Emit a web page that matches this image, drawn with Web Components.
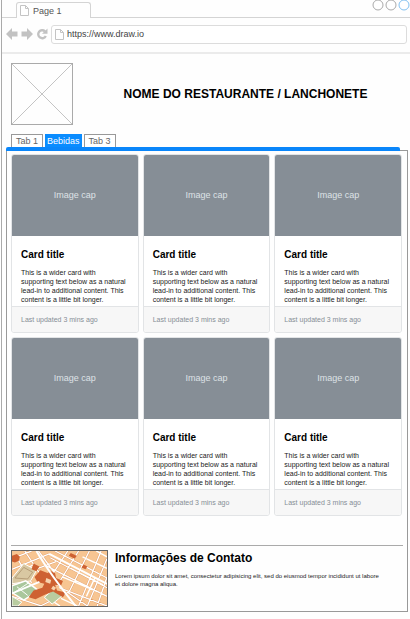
<!DOCTYPE html>
<html lang="pt-BR">
<head>
<meta charset="utf-8">
<title>Page 1</title>
<style>
html{height:100%}
body{margin:0;min-height:100%;display:flex;background:#fefefe;color:#000;font-family:"Liberation Sans",Arial,sans-serif}
browser-window{flex:1}
</style>
</head>
<body>
<browser-window>
  <site-header>NOME DO RESTAURANTE / LANCHONETE</site-header>
  <tab-strip></tab-strip>
  <tab-panel>
    <card-grid>
      <menu-card></menu-card><menu-card></menu-card><menu-card></menu-card>
      <menu-card></menu-card><menu-card></menu-card><menu-card></menu-card>
    </card-grid>
    <contact-info>
      <span slot="title">Informações de Contato</span>
      Lorem ipsum dolor sit amet, consectetur adipisicing elit, sed do eiusmod tempor incididunt ut labore et dolore magna aliqua.
    </contact-info>
  </tab-panel>
</browser-window>
<script>
function define(name, html) {
  const template = document.createElement('template');
  template.innerHTML = '<style>*{box-sizing:border-box}</style>' + html;
  customElements.define(name, class extends HTMLElement {
    constructor() {
      super();
      this.attachShadow({ mode: 'open' }).append(template.content.cloneNode(true));
    }
  });
}

define('page-icon', `
<style>:host{display:block;flex:none;width:9px;height:11px}svg{display:block}</style>
<svg width="9" height="11" viewBox="0 0 9 11" fill="#fff" stroke="#c4c4c4"><path d="M.5.5h5l3 3v7h-8z"/><path d="M5.500.5v3h3" fill="none"/></svg>`);

define('browser-window', `
<style>
:host{display:flex;flex-direction:column;box-sizing:border-box;margin-left:1px;border-left:1px solid #aaa}
.strip{height:18px;display:flex;align-items:flex-end;padding-left:14px;border-bottom:1px solid #d4d4d4}
.tab{display:flex;align-items:center;gap:4px;width:75px;height:16px;margin-bottom:-1px;padding:0 3px;border:1px solid #d4d4d4;border-bottom:0;border-radius:3px 3px 0 0;background:#fefefe;font-size:9px;color:#555}
.dots{margin-left:auto;align-self:flex-start;margin-top:-1px}
.bar{height:36px;display:flex;align-items:center;gap:3px;padding:0 3px 2px 4px;border-bottom:2px solid #ebebeb}
button{display:block;border:0;padding:0;background:none;width:12px;height:12px}
svg{display:block}
.url{flex:1;min-width:0;height:19px;display:flex;align-items:center;gap:3px;padding:0 3px;border:1px solid #dcdcdc;border-radius:3px;background:#fff}
input{flex:1;min-width:0;border:0;padding:0;outline:0;background:none;font:9px "Liberation Sans",Arial,sans-serif;color:#444}
main{flex:1;padding:9px 2px 8px 4px}
</style>
<div class="strip">
  <div class="tab"><page-icon></page-icon>Page 1</div>
  <svg class="dots" width="38" height="12" viewBox="0 0 38 12" fill="#fff"><circle cx="6" cy="6" r="5" stroke="#aaa"/><circle cx="19" cy="6" r="5" stroke="#aaa"/><circle cx="32" cy="6" r="5" stroke="#82c0f0"/></svg>
</div>
<div class="bar">
  <button aria-label="Back"><svg width="12" height="12" viewBox="0 0 12 12" fill="#c2c2c2"><path d="M0 6 6 0v3.500h5.500v5H6V12z"/></svg></button>
  <button aria-label="Forward"><svg width="12" height="12" viewBox="0 0 12 12" fill="#c2c2c2"><path d="M12 6 6 0v3.500H.5v5H6V12z"/></svg></button>
  <button aria-label="Reload"><svg width="12" height="12" viewBox="0 0 12 12"><path d="M9 3.300A4 4 0 1 0 9.800 8" fill="none" stroke="#c2c2c2" stroke-width="2.400"/><path d="M11.500.5v5.300H6z" fill="#c2c2c2"/></svg></button>
  <div class="url"><page-icon></page-icon><input type="text" aria-label="Address" value="https://www.draw.io"></div>
</div>
<main><slot></slot></main>`);

define('site-header', `
<style>
:host{display:flex;align-items:center;padding:0 6px 0 5px}
svg{display:block;flex:none}
h1{flex:1;margin:0;padding-left:20px;padding-right:4px;text-align:center;font-size:12px;line-height:16px}
</style>
<svg width="62" height="62" viewBox="0 0 62 62" fill="none" stroke="#aaa"><rect x=".5" y=".5" width="61" height="61"/><path d="m.5.5 61 61m0-61-61 61" stroke-width=".7"/></svg>
<h1><slot></slot></h1>`);

define('tab-strip', `
<style>
:host{display:block;margin-top:9px}
div{display:flex;gap:2px;padding-left:5px}
button{height:13px;padding:0 4px;border:1px solid #999;border-bottom:0;background:#fff;color:#666;font:9px/12px "Liberation Sans",Arial,sans-serif}
button[aria-selected=true]{padding:0 1px;border-color:#0a8cff;background:#0a8cff;color:#fff}
hr{position:relative;height:4px;margin:0 8px 0 0;border:0;border-radius:2px 2px 0 0;background:#0a86fa}
</style>
<div role="tablist">
  <button role="tab" aria-selected="false">Tab 1</button>
  <button role="tab" aria-selected="true">Bebidas</button>
  <button role="tab" aria-selected="false">Tab 3</button>
</div>
<hr>`);

define('tab-panel', `
<style>:host{display:block;box-sizing:border-box;border:1px solid #999;margin-top:-1px;padding:3px 4px 4px}</style>
<slot></slot>`);

define('card-grid', `
<style>:host{display:grid;grid-template-columns:repeat(3,1fr);gap:4px;margin-right:1px}</style>
<slot></slot>`);

define('menu-card', `
<style>
:host{display:flex;flex-direction:column;box-sizing:border-box;border:1px solid #e2e4e6;border-radius:3px;overflow:hidden;background:#fff}
figure{margin:-1px -1px 0;height:82px;display:grid;place-items:center;background:#868e96;color:#dee2e6;font-size:9px}
.body{padding:12px 8px 2px 9px}
h2{margin:0 0 6px;font-size:10px;line-height:14px}
p{margin:0;font-size:7px;line-height:9px;color:#222}
footer{height:26px;padding:0 9px;border-top:1px solid #e2e4e6;background:#f7f7f7;font-size:7px;line-height:25px;color:#868e96}
</style>
<figure>Image cap</figure>
<div class="body"><h2>Card title</h2>
<p>This is a wider card with supporting text below as a natural lead-in to additional content. This content is a little bit longer.</p></div>
<footer>Last updated 3 mins ago</footer>`);

define('city-map', `
<style>:host{display:block;flex:none;width:97px;height:57px;box-sizing:border-box;border:1px solid #666}svg{display:block;width:100%;height:100%}</style>
<svg viewBox="0 0 97 57" preserveAspectRatio="none">
<rect width="97" height="57" fill="#f7c592"/>
<g fill="none" stroke="#d98e58" stroke-width="2">
<path d="M0 8 20 0M0 19 38 3M8 25 45 11M13 0 30 26M4 5 20 33M27 0 43 22M44 0 97 28M39 7 97 38M34 15 97 47M48 38 97 57M57 0 40 26M68 0 46 36M79 0 58 43M91 0 68 57M97 8 77 57M97 27 87 57M0 47 30 57M29 57 57 43 77 57"/></g>
<g fill="none" stroke="#fff" stroke-width="1.400">
<path d="M0 8 20 0M0 19 38 3M8 25 45 11M13 0 30 26M4 5 20 33M27 0 43 22M44 0 97 28M39 7 97 38M34 15 97 47M48 38 97 57M57 0 40 26M68 0 46 36M79 0 58 43M91 0 68 57M97 8 77 57M97 27 87 57M0 47 30 57M29 57 57 43 77 57M86 0 97 6M52 27 87 42M60 18 93 35M67 12 97 28M72 6 97 18M50 49 67 57M85 27 76 47M34 47 49 57M0 28 22 14"/></g>
<path d="M0 28 12 13 25 20 19 31 0 34z" fill="#d9c8a2" stroke="#fff"/>
<path d="m3 28 9-11 9 5-5 7z" fill="none" stroke="#9d805b" stroke-width=".6"/>
<path d="m0 36 14-5 13 10-15 10-12-8z" fill="#a9c79c" stroke="#fff" stroke-width="1.500"/>
<path d="m5 37 11 9m-15-2 16-11" stroke="#fff"/>
<path d="M0 47 10 53 6 57H0zM33 48l9-8 11 5-12 10z" fill="#b9cca0" stroke="#fff"/>
<g fill="#ce6132">
<path d="m0 5 5-2 3 3-1 4-4 2-3-1zM22 13l6 3-3 5-5-2zM60 2l6 3-2 3-6-3zM73 14l4 2-2 3-4-2z"/>
<path d="m29 20 8 3 1-3 6 3 1 5 7 3-2 5-6-1 2 6 9 2-3 5-10-6-8 3-10 5-7-2 5-7 9-3 2-4-7-2-3-5z"/></g>
<path d="m35 28 5 2-1 4-5-2zM42 36l3 2-2 3-3-2z" fill="#f7d3ae"/>
<path d="M25 0Q38 23 65 57M0 44 28 32" fill="none" stroke="#fff" stroke-width="2"/>
<path d="M38 3 97 34" stroke="#fff" stroke-width="2"/>
</svg>`);

define('contact-info', `
<style>
:host{display:flex;gap:7px;margin-top:29px;padding-top:4px;border-top:1px solid #aaa}
h2{margin:0 0 6px;font-size:12px;line-height:16px}
p{margin:0;padding-right:20px;font-size:6px;line-height:8px;color:#222}
</style>
<city-map role="img" aria-label="Mapa"></city-map>
<div><h2><slot name="title"></slot></h2><p><slot></slot></p></div>`);
</script>
</body>
</html>
